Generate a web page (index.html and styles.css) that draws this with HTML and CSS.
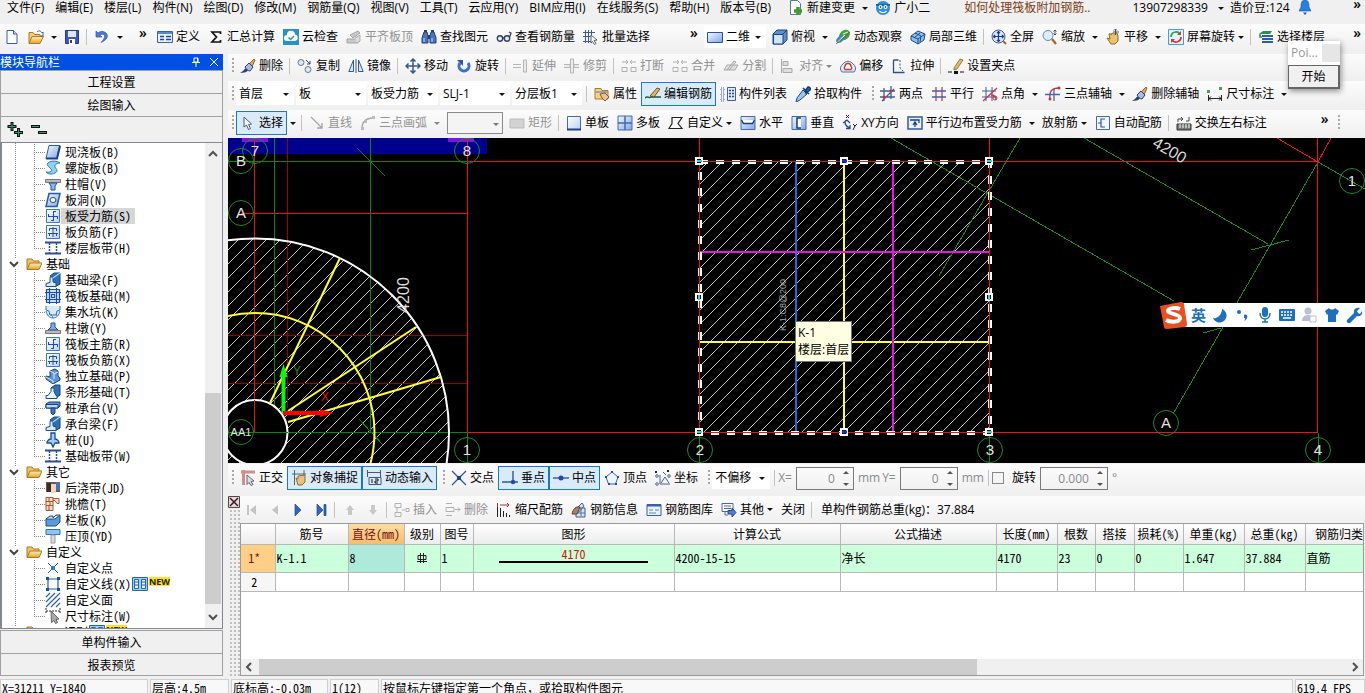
FILE: index.html
```html
<!DOCTYPE html>
<html lang="zh-CN">
<head>
<meta charset="utf-8">
<title>钢筋算量</title>
<link rel="stylesheet" href="styles.css">
</head>
<body>
<svg class="defs" aria-hidden="true">
<defs>
<linearGradient id="gb" x1="0" y1="0" x2="1" y2="1"><stop offset="0" stop-color="#f4f9ff"/><stop offset="1" stop-color="#7fa6e8"/></linearGradient>
<linearGradient id="gl" x1="0" y1="0" x2="1" y2="1"><stop offset="0" stop-color="#fff"/><stop offset="1" stop-color="#b9d2f8"/></linearGradient>
<linearGradient id="gy" x1="0" y1="0" x2="0" y2="1"><stop offset="0" stop-color="#fff0a8"/><stop offset="1" stop-color="#e2a232"/></linearGradient>
<pattern id="hatch" width="14" height="14" patternUnits="userSpaceOnUse"><path d="M-1 15L15-1" stroke="#c4c4c4" stroke-width="1" fill="none"/></pattern>
</defs>
<symbol id="new" viewBox="0 0 16 16"><path d="M3 1.500h6.500l3.500 3.500v9.500H3z" fill="#fff" stroke="#3d5a94"/><path d="M9.500 1.500V5H13" fill="#cfe0fa" stroke="#3d5a94"/></symbol>
<symbol id="open" viewBox="0 0 16 16"><path d="M1 14V3.500h4l1.500 2H12V8" fill="#f5cf69" stroke="#a8792a"/><path d="M1 14.500L4 7.500h11.500L12 14.500z" fill="url(#gy)" stroke="#a8792a"/><path d="M9 3c2-2 4-1 5 1l1-1v4h-3" fill="none" stroke="#47608f"/></symbol>
<symbol id="save" viewBox="0 0 16 16"><path d="M1.500 1.500h13v13h-13z" fill="#3f58b5" stroke="#273a86"/><path d="M4 2h8v6H4z" fill="#dfe9fb"/><path d="M5 10h6v5H5z" fill="#fff"/><path d="M6 11h2v3H6z" fill="#273a86"/></symbol>
<symbol id="undo" viewBox="0 0 16 16"><path d="M2 2v6h6L5.700 6C9 4 12 6 10 9.500c-.7 1.500-2 3-3 4C13 11 15 7 12 4 10 2 6 2 4 4z" fill="#4f7bd0" stroke="#33589f" stroke-width=".7"/></symbol>
<symbol id="def" viewBox="0 0 16 16"><path d="M.5 2.500h15v11H.5z" fill="#e9f1ff" stroke="#3863a8"/><path d="M1 3h14v2H1z" fill="#5b86d0"/><path d="M3 7.500h4M3 10.500h4M9 7.500h5M9 10.500h5" stroke="#24488d" stroke-width="1.500"/></symbol>
<symbol id="sigma" viewBox="0 0 16 16"><path d="M12.500 5V3H4l4.500 5L4 13h8.500v-2" fill="none" stroke="#111" stroke-width="1.700"/></symbol>
<symbol id="cloud" viewBox="0 0 16 16"><path d="M0 0h16v16H0z" fill="#2592c8"/><path d="M4 12a3 3 0 010-6 4 4 0 018-.5 3.300 3.300 0 010 6.500z" fill="#fff"/><path d="M5.500 8.500L7.500 10.500 11 7" fill="none" stroke="#2592c8" stroke-width="1.500"/></symbol>
<symbol id="flat" viewBox="0 0 16 16"><path d="M1 10h11v4H1zM4 6l8-4 2 2-7 5z" fill="#c9c9c9" stroke="#a5a5a5"/><path d="M9 9l5-3v6l-3 2" fill="#ddd" stroke="#aaa"/></symbol>
<symbol id="binoc" viewBox="0 0 16 16"><path d="M3 3h3l1 4v7H1V9zM13 3h-3L9 7v7h6V9z" fill="#4d74b8" stroke="#213f7c"/><path d="M7 6h2v4H7zM3 1h3v2H3zM10 1h3v2h-3z" fill="#213f7c"/><path d="M3 9v4M11 9v4" stroke="#c7dcff"/></symbol>
<symbol id="glass" viewBox="0 0 16 16"><circle cx="4" cy="9.500" r="2.700" fill="#e2ecfa" stroke="#333f5c" stroke-width="1.400"/><circle cx="11" cy="9.500" r="2.700" fill="#e2ecfa" stroke="#333f5c" stroke-width="1.400"/><path d="M7 9h1M13.500 8.500L15 4l-2-1" fill="none" stroke="#333f5c" stroke-width="1.300"/></symbol>
<symbol id="batch" viewBox="0 0 16 16"><path d="M2.500 1v13M5.500 1v13M8.500 1v8M0 3.500h12M0 7.500h8M0 12.500h8" stroke="#3c5a94" fill="none"/><path d="M8 6l6 5-3 .5 2 3-1.500 1-2-3L8 14z" fill="#fff" stroke="#566"/></symbol>
<symbol id="rect2d" viewBox="0 0 16 16"><path d="M.5 3.500h15v10H.5z" fill="url(#gb)" stroke="#2c4f9c"/></symbol>
<symbol id="cube" viewBox="0 0 16 16"><path d="M1 5l4-4h10v10l-4 4H1z" fill="#5f8fc7" stroke="#1f4377"/><path d="M1.500 5.500h9.500V15H1.500z" fill="#cfe4fa" stroke="#1f4377"/><path d="M11 5l4-4" stroke="#1f4377"/></symbol>
<symbol id="orbit" viewBox="0 0 16 16"><ellipse cx="9.500" cy="6" rx="6" ry="4.500" fill="#3aa14a" transform="rotate(-40 9.500 6)"/><ellipse cx="5.500" cy="10" rx="5" ry="2.800" fill="#2f8ac0" transform="rotate(-40 5.500 10)"/><path d="M8 5l5-2M3 13l7-7" stroke="#d9f7c0" stroke-width="1.300"/><path d="M1 15L15 3" stroke="#a33" stroke-width=".8"/></symbol>
<symbol id="local" viewBox="0 0 16 16"><path d="M1 7l7-5 7 3-1 6-6 4-7-4z" fill="#8fc0ea" stroke="#1c4c86"/><path d="M1 7l7 3 7-5M8 10v5M5 4l6 3-1 6M4 9l6-5" fill="none" stroke="#1c4c86"/></symbol>
<symbol id="full" viewBox="0 0 16 16"><circle cx="7.500" cy="7.500" r="6.500" fill="#d5e7fb" stroke="#44597e"/><path d="M7.500 2.500v10M2.500 7.500h10M6 4l1.500-1.500L9 4M6 11l1.500 1.500L9 11M4 6L2.500 7.500 4 9M11 6l1.500 1.500L11 9" stroke="#1d3d8c" fill="none" stroke-width="1.200"/><path d="M12 12l3 3" stroke="#a4632d" stroke-width="2"/></symbol>
<symbol id="zoom" viewBox="0 0 16 16"><circle cx="6" cy="6.500" r="5" fill="#dcebfd" stroke="#6b86a8"/><path d="M10 10l4 5" stroke="#a4632d" stroke-width="2.200"/><path d="M13 1v5M11.500 2.500L13 1l1.500 1.500M11.500 4.500L13 6l1.500-1.500" stroke="#234" fill="none" stroke-width=".8"/></symbol>
<symbol id="hand" viewBox="0 0 16 16"><path d="M2 9l3 1-1-5c1-1 2 0 2 1l1-2 2 1 3-1 1 3v5l-3 3H6z" fill="#e9c46a" stroke="#8d6a24"/><path d="M10.500 0v6M8 3h6M9 1.500L10.500 0 12 1.500" stroke="#345" fill="none" stroke-width=".9"/></symbol>
<symbol id="scr" viewBox="0 0 16 16"><path d="M.5.5h15v15H.5z" fill="#e0f2fc" stroke="#4a9bd0"/><path d="M3 8a5 5 0 019-3" fill="none" stroke="#39a04a" stroke-width="1.800"/><path d="M13 8a5 5 0 01-9 3" fill="none" stroke="#d33" stroke-width="1.800"/><path d="M13 2v4H9zM3 14v-4h4z" fill="#d33"/></symbol>
<symbol id="floors" viewBox="0 0 16 16"><path d="M1 5l4-3h9l-2 3z" fill="#2f8b57"/><path d="M4 7h11M4 10h11M4 13h11" stroke="#2a5ea8" stroke-width="1.800"/><path d="M2 5v3h2" fill="none" stroke="#2f8b57" stroke-width="1.500"/></symbol>
<symbol id="doc" viewBox="0 0 16 16"><path d="M2.500.5h7l3 3v11h-10z" fill="#fff" stroke="#5578b0"/><path d="M10 7v8M6 11h8" stroke="#3f9a2a" stroke-width="3.500"/></symbol>
<symbol id="face" viewBox="0 0 16 16"><circle cx="8" cy="8" r="7" fill="#2b8fd8"/><path d="M1 5h14" stroke="#1769ad" stroke-width="2"/><circle cx="5.500" cy="7" r="2" fill="#fff"/><circle cx="10.500" cy="7" r="2" fill="#fff"/><circle cx="5.500" cy="7" r=".8"/><circle cx="10.500" cy="7" r=".8"/><path d="M4.500 11c2 2 5 2 7 0" stroke="#fff" stroke-width="1.400" fill="none"/></symbol>
<symbol id="bell" viewBox="0 0 16 16"><path d="M8 0c4 0 4 4 4 7l2 4H2l2-4c0-3 0-7 4-7z" fill="#2a7de1" stroke="#1757ad" stroke-width=".6"/><path d="M6 12.500h4L8 15z" fill="#1757ad"/></symbol>
<symbol id="del" viewBox="0 0 16 16"><path d="M9 6l5-5 1 1-3 7z" fill="#e8a55a" stroke="#7c4b1b" stroke-width=".8"/><path d="M5 9l4-4 4 4-3 4c-2 0-4-2-5-4z" fill="#a9bde4" stroke="#2b3c73"/><path d="M0 14.500c4-1 4-4 6-4l2 2c-2 2-4 2.500-8 2z" fill="#2b3c73"/></symbol>
<symbol id="copy" viewBox="0 0 16 16"><circle cx="4" cy="4.500" r="3" fill="#dfe9f5" stroke="#66788f"/><circle cx="11" cy="11.500" r="3" fill="#dfe9f5" stroke="#66788f"/><path d="M9 2l4 4M13 3v3h-3" stroke="#2546a0" fill="none"/></symbol>
<symbol id="mirror" viewBox="0 0 16 16"><path d="M5.500 2v11.500H.8zM10.500 2v11.500h4.700z" fill="#dce8f8" stroke="#31588f"/><path d="M8 1v14" stroke="#31588f"/></symbol>
<symbol id="move" viewBox="0 0 16 16"><path d="M8 1v14M1 8h14M5.500 3.500L8 1l2.500 2.500M5.500 12.500L8 15l2.500-2.500M3.500 5.500L1 8l2.500 2.500M12.500 5.500L15 8l-2.500 2.500" fill="none" stroke="#39598c" stroke-width="1.500"/></symbol>
<symbol id="rot" viewBox="0 0 16 16"><path d="M4 5a5 5 0 108 0" fill="none" stroke="#3c6fc6" stroke-width="3"/><path d="M1 2h6v6z" fill="#2a57aa"/></symbol>
<symbol id="ext" viewBox="0 0 16 16"><path d="M0 6.500h8M0 9.500h8M10.500 2v12h3V2z" stroke="#b5b5b5" fill="#e8e8e8"/></symbol>
<symbol id="trim" viewBox="0 0 16 16"><path d="M0 6.500h6v3H0M15 6.500h-5v3h5M6.500 1v14h3V1z" stroke="#b5b5b5" fill="#ececec"/></symbol>
<symbol id="brk" viewBox="0 0 16 16"><path d="M1 9.500h5v4H1zM10 9.500h5v4h-5zM1 4h6M9 4h6M5 2l2 2-2 2M11 2L9 4l2 2" stroke="#b0b0b0" fill="none"/></symbol>
<symbol id="split" viewBox="0 0 16 16"><path d="M1 12l3-5h11l-3 5zM4 12l7-9 2 1-7 8" stroke="#aaa" fill="#ddd"/></symbol>
<symbol id="align" viewBox="0 0 16 16"><path d="M1.500 1v14M3 3.500h5v4H3zM3 10.500h9v4H3z" stroke="#aaa" fill="#dedede"/></symbol>
<symbol id="offset" viewBox="0 0 16 16"><path d="M2 14a5 5 0 011-8 6 6 0 0110 0 5 5 0 011 8z" fill="#dce9f8" stroke="#5a6e92"/><path d="M5 11.500a2 2 0 010-3 3 3 0 016 0 2 2 0 010 3z" fill="#fff" stroke="#c33" stroke-width="1.300"/></symbol>
<symbol id="stretch" viewBox="0 0 16 16"><path d="M2.500 2v12.500h11M2.500 2h5" fill="none" stroke="#28508e" stroke-width="1.300"/><path d="M9 2v8l4 4" fill="none" stroke="#28508e" stroke-dasharray="2 1.500"/></symbol>
<symbol id="grip" viewBox="0 0 16 16"><path d="M0 14h4M12 14h4" stroke="#111" stroke-width="1.200"/><path d="M6 13h4v3H6z" fill="#111"/><path d="M6 10l6-9 3 1-6 9-3 1z" fill="#e5bb65" stroke="#775220" stroke-width=".7"/></symbol>
<symbol id="prop" viewBox="0 0 16 16"><path d="M1 2.500h6l1 2h6V13H1z" fill="#f6d27a" stroke="#b07a21"/><path d="M1 6h13" stroke="#7b94c7" stroke-width="1.500"/><path d="M6 8l5-1 4 4-4 4-3-3z" fill="#e8c392" stroke="#8b572a"/></symbol>
<symbol id="edit" viewBox="0 0 16 16"><path d="M0 12c3-3 3 1 6-1h10" fill="none" stroke="#1b5a37" stroke-width="1.500"/><path d="M5 10l7-8 3 1-6 8z" fill="#e7b35b" stroke="#4b3820" stroke-width=".8"/></symbol>
<symbol id="list" viewBox="0 0 16 16"><path d="M1 2h3v3H1zM1 7h3v3H1zM1 12h3v3H1z" fill="none" stroke="#3d5f9e" stroke-dasharray="1 1"/><path d="M7.500 1.500h8v13h-8z" fill="#e3edfb" stroke="#3d5f9e"/><path d="M9 4.500h2M12 4.500h2M9 7.500h2M12 7.500h2M9 10.500h2M12 10.500h2" stroke="#24488d" stroke-width="1.500"/></symbol>
<symbol id="pick" viewBox="0 0 16 16"><path d="M8 4l4 4-7 6-4 2 1-4z" fill="#9ec7ec" stroke="#1d4685"/><path d="M8 2l6 6M10 5l3-4c2 0 3 2 2 3l-4 3z" fill="#2c62b4" stroke="#173a75" stroke-width="1.500"/></symbol>
<symbol id="two" viewBox="0 0 16 16"><path d="M4 2v13M11 0v13M0 5h15M0 11h15M2 15L14 3" stroke="#475c93" stroke-width="1.300"/><circle cx="4" cy="11" r="1.500" fill="#c33"/><circle cx="11" cy="5" r="1.500" fill="#c33"/></symbol>
<symbol id="par" viewBox="0 0 16 16"><path d="M5 1v14M11 1v14" stroke="#b44a5c" stroke-width="1.300"/><path d="M1 5h14M1 11h14" stroke="#44639d" stroke-width="1.300"/></symbol>
<symbol id="ang" viewBox="0 0 16 16"><path d="M4 1v14M10 1v14M0 5h14M0 11h14" stroke="#475c93"/><path d="M1 15L15 2M9 9c3 0 5 2 5 5" stroke="#c33a4c" stroke-width="1.300" fill="none"/><circle cx="13" cy="12" r="2" fill="none" stroke="#c33a4c"/></symbol>
<symbol id="arc3" viewBox="0 0 16 16"><path d="M5 13C4 5 7 2 14 2" stroke="#c33a4c" stroke-width="1.300" fill="none"/><path d="M0 8.500h15M9 3v12" stroke="#4169aa" stroke-width="1.300"/><circle cx="5" cy="13" r="1.500" fill="#c33"/><circle cx="14" cy="2" r="1.500" fill="#c33"/></symbol>
<symbol id="dim" viewBox="0 0 16 16"><path d="M1.500 9v6M14.500 9v6M2 12.500h12M4 10.500l-2 2 2 2M12 10.500l2 2-2 2" stroke="#222" fill="none"/><path d="M0 4h3v3H0zM12 1h3v3h-3z" fill="#4d9c58"/></symbol>
<symbol id="sel" viewBox="0 0 16 16"><path d="M4 2v10l2.500-2 2 4.500 2-1-2-4 3-.5z" fill="#fff" stroke="#44597e"/></symbol>
<symbol id="line" viewBox="0 0 16 16"><path d="M2 2l11 11M13 8v5H8" stroke="#a5a5a5" fill="none" stroke-width="1.300"/></symbol>
<symbol id="arc" viewBox="0 0 16 16"><path d="M2 14C2 7 6 3 13 3" stroke="#aaa" fill="none" stroke-width="1.400"/><path d="M1 12h3v3H1zM4 5h3v3H4zM12 1h3v3h-3z" fill="#bbb"/></symbol>
<symbol id="rectd" viewBox="0 0 16 16"><path d="M1 4h14v9H1z" fill="#d2d2d2" stroke="#bdbdbd"/></symbol>
<symbol id="one" viewBox="0 0 16 16"><path d="M1.500 1.500h13v13h-13z" fill="url(#gl)" stroke="#4668a8"/><path d="M1 14.500h14" stroke="#223f83" stroke-width="2"/></symbol>
<symbol id="multi" viewBox="0 0 16 16"><path d="M1 1h14v14H1z" fill="url(#gb)" stroke="#4668a8"/><path d="M8 1v14M1 8h14" stroke="#4668a8" stroke-width="1.500"/></symbol>
<symbol id="poly" viewBox="0 0 16 16"><path d="M4 2.500h10l-4 6 4 5H1l3-5z" fill="#fff" stroke="#222" stroke-width="1.200"/></symbol>
<symbol id="hor" viewBox="0 0 16 16"><path d="M1 1.500h14v13H1z" fill="url(#gb)" stroke="#4668a8"/><path d="M1.500 5l2 3.500h9l2-3.500" fill="#fff" stroke="#173d88" stroke-width="1.500"/></symbol>
<symbol id="ver" viewBox="0 0 16 16"><path d="M1 1.500h14v13H1z" fill="url(#gb)" stroke="#4668a8"/><path d="M10 3H6v10h4" fill="#fff" stroke="#173d88" stroke-width="1.500"/></symbol>
<symbol id="xy" viewBox="0 0 16 16"><path d="M4 5c-2 3-1 6 4 8M1 8l4-3 3 3M8 10v3.500H4" fill="none" stroke="#234a92" stroke-width="1.300"/><path d="M4 0l3 3M7 0L4 3M11 9l2 2 2-2M13 11l-2 4" stroke="#222" fill="none"/></symbol>
<symbol id="side" viewBox="0 0 16 16"><path d="M1 2h14v12H1z" fill="#eaf2ff" stroke="#36589c" stroke-width="1.500"/><path d="M3 5h9v3M8 7v5M6 10l2-3 2 3" fill="none" stroke="#173d88" stroke-width="1.300"/></symbol>
<symbol id="auto" viewBox="0 0 16 16"><path d="M1.500 1.500h13v13h-13z" fill="#f1f6ff" stroke="#4668a8"/><path d="M10 4H6v8h4M6 8H3" fill="none" stroke="#3157a0" stroke-width="1.200"/></symbol>
<symbol id="swap" viewBox="0 0 16 16"><path d="M1 9h14v6H1z" fill="#777" stroke="#333"/><path d="M4 9v4M7 9v4M10 9v4M13 9v4" stroke="#fff"/><path d="M2 7V4h4M5 2l2 2-2 2M10 6h3V2" fill="none" stroke="#444"/></symbol>
<symbol id="ortho" viewBox="0 0 16 16"><path d="M1 2h14M3.500 0v15" stroke="#d48d8d" stroke-width="3"/><path d="M7 5l7 6-3 .5 2 3-2 1-2-3-2 2z" fill="#ddd" stroke="#667"/></symbol>
<symbol id="snap" viewBox="0 0 16 16"><path d="M1 4h14M3.500 0v15M13 0v9" stroke="#4a628f"/><path d="M5 8l2 1V6l7-1v7l-3 3H7z" fill="#eac275" stroke="#936c2b"/></symbol>
<symbol id="dyn" viewBox="0 0 16 16"><path d="M1 2.500h14M1.500 0v7M14.500 0v7M3 7.500h12v7H3z" fill="none" stroke="#45577c"/><path d="M6 9v4M9 9h3v2H9v2h3" fill="none" stroke="#111"/></symbol>
<symbol id="cross" viewBox="0 0 16 16"><path d="M1 1l14 14M15 1L1 15" stroke="#33569a" stroke-width="1.300"/><path d="M6 6h4v4H6z" fill="#1a3ea0"/></symbol>
<symbol id="perp" viewBox="0 0 16 16"><path d="M0 12h16M11 1v11" stroke="#33569a" stroke-width="1.400"/><circle cx="11" cy="12" r="2.200" fill="#2249a5"/></symbol>
<symbol id="mid" viewBox="0 0 16 16"><path d="M0 8h16" stroke="#33569a" stroke-width="1.400"/><circle cx="8" cy="8" r="2.500" fill="#2249a5"/></symbol>
<symbol id="pent" viewBox="0 0 16 16"><path d="M8 2l6 5-2.500 7h-7L2 7z" fill="#eef5ff" stroke="#3b65a8"/><path d="M7 1h2v2H7zM1 6h2v2H1zM13 6h2v2h-2zM4 13h2v2H4zM11 13h2v2h-2z" fill="#2249a5"/></symbol>
<symbol id="coord" viewBox="0 0 16 16"><path d="M5 5v9h10M6 13l4-6 4 6M8 2l3 3" fill="none" stroke="#44619a"/><g fill="#fff" stroke="#44619a"><circle cx="2" cy="6" r="1.300"/><circle cx="2" cy="14" r="1.300"/><circle cx="14" cy="6" r="1.300"/></g><path d="M0 1l2 2M2 1L0 3M12 0l2 2M14 0l-2 2" stroke="#222"/></symbol>
<symbol id="first" viewBox="0 0 16 16"><path d="M3 3h2v10H3zM12 3v10L6 8z" fill="#c4c4c4"/></symbol>
<symbol id="prev" viewBox="0 0 16 16"><path d="M11 3v10L5 8z" fill="#c4c4c4"/></symbol>
<symbol id="next" viewBox="0 0 16 16"><path d="M5 2v12l6-6z" fill="#2e66c8" stroke="#1e4795" stroke-width=".7"/></symbol>
<symbol id="last" viewBox="0 0 16 16"><path d="M4 2v12l6-6zM11 2.500h2v11h-2z" fill="#2e66c8" stroke="#1e4795" stroke-width=".7"/></symbol>
<symbol id="up" viewBox="0 0 16 16"><path d="M8 3l4 5h-2v5H6V8H4z" fill="#c8c8c8"/></symbol>
<symbol id="down" viewBox="0 0 16 16"><path d="M8 13L4 8h2V3h4v5h2z" fill="#c8c8c8"/></symbol>
<symbol id="ins" viewBox="0 0 16 16"><path d="M1 1.500h6v4H1zM1 10.500h6v4H1zM3 6v4M8 8h3M12 6.500h3v3h-3z" fill="none" stroke="#b0b0b0"/></symbol>
<symbol id="rem" viewBox="0 0 16 16"><path d="M1 1.500h6M1 5.500h8v4H1zM1 13.500h6M10 7.500h5M13 5.500l2 2-2 2" fill="none" stroke="#b0b0b0"/></symbol>
<symbol id="scale" viewBox="0 0 16 16"><path d="M1.500 1v14M4 3h9M11 1l2 2-2 2" fill="none" stroke="#a33a3a"/><path d="M1.500 5v10M4.500 6v9M7.500 9v6M10.500 11v4M13.500 13v2" stroke="#222"/></symbol>
<symbol id="info" viewBox="0 0 16 16"><path d="M3 9l8-8 2 3-7 8zM5 6h9v9H5z" fill="#d3e2f6" stroke="#3c5d98"/><path d="M1 12c1-5 4-8 8-7l-3 7z" fill="#a88655" stroke="#5c4327"/><path d="M10 6v8M6 11h8" stroke="#5575af"/></symbol>
<symbol id="lib" viewBox="0 0 16 16"><path d="M1 2.500h14v11H1z" fill="#eaf2ff" stroke="#3a5f9e"/><path d="M1 3.500h14" stroke="#3a5f9e" stroke-width="2"/><path d="M3 8h4M3 11h7M9 8h4" stroke="#5f82bc"/></symbol>
<symbol id="other" viewBox="0 0 16 16"><path d="M1 1.500h11v8H1zM3 4h7M3 6.500h7M4 10v3h3" fill="#fff" stroke="#4669aa"/><path d="M7 8.500h4V6l4 4.500-4 4.500v-3H7z" fill="#4f80dc" stroke="#21458e"/></symbol>
<symbol id="fold" viewBox="0 0 16 16"><path d="M1 13V3h5l1.500 2H13v3" fill="#f0c65a" stroke="#a37827"/><path d="M1 13.500L4 7h12l-3 6.500z" fill="url(#gy)" stroke="#a37827"/></symbol>
<symbol id="slab" viewBox="0 0 16 16"><path d="M4 1.500h11L12 14.500H1z" fill="url(#gb)" stroke="#2b59a5"/><path d="M1 14.500h11L15 2" fill="none" stroke="#1c3f86" stroke-width="2"/></symbol>
<symbol id="spiral" viewBox="0 0 16 16"><path d="M3 3c4-3 9-2 12 0-3 0-6 2-5 4s4 4 0 6c-4 2-7 1-9-1 4 1 7-1 5-3S1 5 3 3z" fill="#8ed0ef" stroke="#2477b3"/></symbol>
<symbol id="cap" viewBox="0 0 16 16"><path d="M.5 3.500h15v3H.5z" fill="#bbb" stroke="#777"/><path d="M4 7h8l-2 3v4H6v-4z" fill="#8fb7ef" stroke="#23509b"/></symbol>
<symbol id="hole" viewBox="0 0 16 16"><path d="M4 1.500h11L12 14.500H1z" fill="url(#gb)" stroke="#2b59a5" stroke-width="1.500"/><ellipse cx="8" cy="8" rx="3" ry="2.500" fill="#fff" stroke="#1b4a9b"/></symbol>
<symbol id="rebar" viewBox="0 0 16 16"><path d="M1.500 1.500h13v13h-13z" fill="url(#gl)" stroke="#4175c4"/><path d="M8.500 3v10M3 8.500h10M3.500 6v3M12.500 8v3M8 12.500h-2M9 3.500h2" stroke="#1c4c9f" fill="none"/></symbol>
<symbol id="neg" viewBox="0 0 16 16"><path d="M1.500 1.500h13v13h-13z" fill="url(#gl)" stroke="#4175c4"/><path d="M4.500 7V4.500h7V7M4.500 12V9.500h7V12M3 9.500h10M8 3v10" stroke="#1c4c9f" fill="none"/></symbol>
<symbol id="band" viewBox="0 0 16 16"><path d="M0 2.500h16M0 13.500h16" stroke="#2c4f8f" stroke-width="2"/><path d="M4.500 3v10M11.500 3v10" stroke="#2c4f8f" stroke-width="1.500" stroke-dasharray="2 1"/></symbol>
<symbol id="beam" viewBox="0 0 16 16"><path d="M5 4l4-3h6v11l-5 3" fill="#2e6fba" stroke="#184478"/><path d="M1 14.500v-3l4-1V5h3v5l3 1v3.500z" fill="#d4eafd" stroke="#184e91"/><path d="M8 6l7-5" stroke="#9fd3ff" stroke-width="1.500"/></symbol>
<symbol id="raft" viewBox="0 0 16 16"><path d="M1.500 1.500h13v13h-13zM4.500 0v16M11.500 0v16M0 4.500h16M0 11.500h16M6.500 6.500h3v3h-3z" fill="#cfe3ff" stroke="#1c4c9f" stroke-width="1.200"/></symbol>
<symbol id="sump" viewBox="0 0 16 16"><path d="M1 2v4l3 1 1 4h6l1-4 3-1V2M1 7c1 4 3 7 7 7s6-3 7-7" fill="#d8ebfd" stroke="#3373b7"/><path d="M4 10h1M7 13h1M11 11h1M6 11h1" stroke="#184e91"/></symbol>
<symbol id="pier" viewBox="0 0 16 16"><path d="M6 3h4v4l3 3H3l3-3z" fill="#7fabe8" stroke="#23509b"/><path d="M.5 10.500h15v3H.5z" fill="#bbb" stroke="#777"/></symbol>
<symbol id="iso" viewBox="0 0 16 16"><path d="M1 8l4 1V3l5-2 3 2v5l2 2v2l-7 4-7-5z" fill="#5c95d8" stroke="#153f77"/><path d="M5 3l4 2v6M1 9l7 4v2M13 4L9 6" fill="none" stroke="#d8ecff"/></symbol>
<symbol id="strip" viewBox="0 0 16 16"><path d="M6 4l4-3h5v10l-4 3" fill="#2e6fba" stroke="#184478"/><path d="M1 14.500v-3h2l3-4V4h3v3.500l2 4h1v3z" fill="#e6f3ff" stroke="#184e91"/></symbol>
<symbol id="pilecap" viewBox="0 0 16 16"><path d="M1 4l3-2h11v4l-2 2H1z" fill="#5b94d6" stroke="#153f77"/><path d="M1 4.500h12V8H1z" fill="#b9d9f8" stroke="#153f77"/><path d="M6 8h4v5l-2 2-2-2z" fill="#3c78c2" stroke="#153f77"/></symbol>
<symbol id="pile" viewBox="0 0 16 16"><path d="M6 1h4v6c2 0 4 2 4 4h-4l-2 4-2-4H2c0-2 2-4 4-4z" fill="#a8cdf5" stroke="#184e91" stroke-width="1.300"/></symbol>
<symbol id="post" viewBox="0 0 16 16"><path d="M1 2h14v10H1z" fill="#6f5a4a"/><path d="M2 3h4v9H2z" fill="#3a2b27"/><path d="M6 4h5v9H6z" fill="#f0d8bf"/><path d="M11 2h4v8h-4z" fill="#4273bd"/></symbol>
<symbol id="eave" viewBox="0 0 16 16"><path d="M1 1.500h7v13H1zM1 5.500h7M1 9.500h7M4 1v4M5 5v4M4 10v4M8 2.500h6v5h-2l-2-3H8" fill="#f7dac7" stroke="#a5582e"/></symbol>
<symbol id="rail" viewBox="0 0 16 16"><path d="M1 7l9 0 5-4v7l-4 4H1z" fill="#5c9cdc" stroke="#174c85"/><path d="M1 7l4-3h3v2l3-3h4" fill="#a8d6fb" stroke="#174c85"/></symbol>
<symbol id="coping" viewBox="0 0 16 16"><path d="M1 1.500h14v5H1z" fill="#91c3f0" stroke="#2e73b4"/><path d="M6 7h4v8H6z" fill="#d9d9d9" stroke="#999"/></symbol>
<symbol id="cpt" viewBox="0 0 16 16"><path d="M3 3l10 10M13 3L3 13" stroke="#33569a"/><path d="M6 6h4v4H6z" fill="#3477dc"/></symbol>
<symbol id="cline" viewBox="0 0 16 16"><path d="M3 3h10v10H3z" fill="none" stroke="#2b59a5" stroke-width="1.200"/><path d="M1 1h3v3H1zM12 1h3v3h-3zM1 12h3v3H1zM12 12h3v3h-3z" fill="#1c4c9f"/></symbol>
<symbol id="cface" viewBox="0 0 16 16"><path d="M1 5l4-4M1 10l9-9M1 15L15 1M6 15l9-9M11 15l4-4" stroke="#2b62b8" stroke-width="1.200"/></symbol>
<symbol id="cdim" viewBox="0 0 16 16"><path d="M1 0v6M15 0v6M1 3h14" stroke="#333" stroke-dasharray="2 1"/><path d="M6 3l8 8-3 .5 1.500 3-2 1-1.500-3-2.500 2z" fill="#aaa" stroke="#666"/></symbol>
<symbol id="book" viewBox="0 0 16 16"><path d="M.5 1.500h15v13H.5z" fill="#9cd1f6" stroke="#28659b"/><path d="M2.500 3.500h4v9h-4zM9.500 3.500h4v9h-4zM3 6h3M3 9h3M10 6h3M10 9h3" fill="#e5f4ff" stroke="#28659b"/></symbol>
<symbol id="closex" viewBox="0 0 12 12"><path d="M.5.500h11v11H.5z" fill="#ddd" stroke="#544"/><path d="M2 2l8 8M10 2l-8 8" stroke="#412" stroke-width="1.500"/></symbol>
</svg>

<header class="menubar">
<nav class="menus"><button>文件(F)</button><button>编辑(E)</button><button>楼层(L)</button><button>构件(N)</button><button>绘图(D)</button><button>修改(M)</button><button>钢筋量(Q)</button><button>视图(V)</button><button>工具(T)</button><button>云应用(Y)</button><button>BIM应用(I)</button><button>在线服务(S)</button><button>帮助(H)</button><button>版本号(B)</button></nav>
<button class="b"><svg><use href="#doc"/></svg>新建变更</button><i class="ar"></i>
<button class="b"><svg><use href="#face"/></svg>广小二</button>
<div class="account"><a href="#help" class="tip">如何处理筏板附加钢筋..</a><button class="b phone">13907298339</button><i class="ar"></i><span>造价豆:124</span><button class="b bell" aria-label="通知"><svg><use href="#bell"/></svg></button></div>
<span class="more end">»</span>
</header>

<div class="bar top">
<button class="b" aria-label="新建"><svg><use href="#new"/></svg></button><button class="b" aria-label="打开"><svg><use href="#open"/></svg></button><i class="ar"></i><button class="b" aria-label="保存"><svg><use href="#save"/></svg></button><i class="sep"></i><button class="b" aria-label="撤销"><svg><use href="#undo"/></svg></button><i class="ar"></i><span class="more gap">»</span>
<button class="b"><svg><use href="#def"/></svg>定义</button><button class="b"><svg><use href="#sigma"/></svg>汇总计算</button><button class="b"><svg><use href="#cloud"/></svg>云检查</button><button class="b" disabled><svg><use href="#flat"/></svg>平齐板顶</button><button class="b"><svg><use href="#binoc"/></svg>查找图元</button><button class="b"><svg><use href="#glass"/></svg>查看钢筋量</button><button class="b"><svg><use href="#batch"/></svg>批量选择</button><span class="more wide">»</span>
<label class="pick view"><svg><use href="#rect2d"/></svg><select aria-label="视图维度"><option>二维</option></select></label>
<button class="b"><svg><use href="#cube"/></svg>俯视</button><i class="ar"></i><button class="b"><svg><use href="#orbit"/></svg>动态观察</button><button class="b"><svg><use href="#local"/></svg>局部三维</button><i class="sep"></i><button class="b"><svg><use href="#full"/></svg>全屏</button><button class="b"><svg><use href="#zoom"/></svg>缩放</button><i class="ar"></i><button class="b"><svg><use href="#hand"/></svg>平移</button><i class="ar"></i><button class="b"><svg><use href="#scr"/></svg>屏幕旋转<i class="tri"></i></button><i class="sep"></i><button class="b"><svg><use href="#floors"/></svg>选择楼层</button><span class="more end">»</span>
</div>

<div class="main">
<aside class="nav">
<div class="nav-title"><span>模块导航栏</span><button aria-label="固定"><svg viewBox="0 0 10 10"><path d="M3 1h4v4H3zM1 5.500h8M5 6v4M6.500 1v4" fill="none" stroke="#fff"/></svg></button><button aria-label="关闭"><svg viewBox="0 0 10 10"><path d="M1 1l8 8M9 1L1 9" stroke="#fff"/></svg></button></div>
<button class="nav-tab">工程设置</button>
<button class="nav-tab">绘图输入</button>
<div class="nav-tools"><button aria-label="展开"><svg viewBox="0 0 16 16"><path d="M5 0v9M.5 4.500h9M11.500 6v9M7 10.500h9" stroke="#111" stroke-width="3"/><path d="M5 1v7M1.500 4.500h7M11.500 7v7M8 10.500h7" stroke="#2f9a6a"/></svg></button><button aria-label="折叠"><svg viewBox="0 0 16 16"><path d="M0 4.500h9M7 10.500h9" stroke="#111" stroke-width="3"/><path d="M1 4.500h7M8 10.500h7" stroke="#2f9a6a"/></svg></button></div>
<div class="tree">
<ul>
<li class="leaf"><svg><use href="#slab"/></svg><span>现浇板(B)</span></li>
<li class="leaf"><svg><use href="#spiral"/></svg><span>螺旋板(B)</span></li>
<li class="leaf"><svg><use href="#cap"/></svg><span>柱帽(V)</span></li>
<li class="leaf"><svg><use href="#hole"/></svg><span>板洞(N)</span></li>
<li class="leaf on"><svg><use href="#rebar"/></svg><span>板受力筋(S)</span></li>
<li class="leaf"><svg><use href="#neg"/></svg><span>板负筋(F)</span></li>
<li class="leaf last"><svg><use href="#band"/></svg><span>楼层板带(H)</span></li>
<li class="group"><svg class="chev" viewBox="0 0 10 10"><path d="M1 3l4 4 4-4"/></svg><svg><use href="#fold"/></svg><span>基础</span></li>
<li class="leaf"><svg><use href="#beam"/></svg><span>基础梁(F)</span></li>
<li class="leaf"><svg><use href="#raft"/></svg><span>筏板基础(M)</span></li>
<li class="leaf"><svg><use href="#sump"/></svg><span>集水坑(K)</span></li>
<li class="leaf"><svg><use href="#pier"/></svg><span>柱墩(Y)</span></li>
<li class="leaf"><svg><use href="#rebar"/></svg><span>筏板主筋(R)</span></li>
<li class="leaf"><svg><use href="#neg"/></svg><span>筏板负筋(X)</span></li>
<li class="leaf"><svg><use href="#iso"/></svg><span>独立基础(P)</span></li>
<li class="leaf"><svg><use href="#strip"/></svg><span>条形基础(T)</span></li>
<li class="leaf"><svg><use href="#pilecap"/></svg><span>桩承台(V)</span></li>
<li class="leaf"><svg><use href="#beam"/></svg><span>承台梁(F)</span></li>
<li class="leaf"><svg><use href="#pile"/></svg><span>桩(U)</span></li>
<li class="leaf last"><svg><use href="#band"/></svg><span>基础板带(W)</span></li>
<li class="group"><svg class="chev" viewBox="0 0 10 10"><path d="M1 3l4 4 4-4"/></svg><svg><use href="#fold"/></svg><span>其它</span></li>
<li class="leaf"><svg><use href="#post"/></svg><span>后浇带(JD)</span></li>
<li class="leaf"><svg><use href="#eave"/></svg><span>挑檐(T)</span></li>
<li class="leaf"><svg><use href="#rail"/></svg><span>栏板(K)</span></li>
<li class="leaf last"><svg><use href="#coping"/></svg><span>压顶(YD)</span></li>
<li class="group"><svg class="chev" viewBox="0 0 10 10"><path d="M1 3l4 4 4-4"/></svg><svg><use href="#fold"/></svg><span>自定义</span></li>
<li class="leaf"><svg><use href="#cpt"/></svg><span>自定义点</span></li>
<li class="leaf"><svg><use href="#cline"/></svg><span>自定义线(X)</span><svg class="book"><use href="#book"/></svg><b class="fresh">NEW</b></li>
<li class="leaf"><svg><use href="#cface"/></svg><span>自定义面</span></li>
<li class="leaf last"><svg><use href="#cdim"/></svg><span>尺寸标注(W)</span></li>
<li class="group"><svg class="chev"></svg><svg><use href="#fold"/></svg><span>CAD识别</span><svg class="book"><use href="#book"/></svg><b class="fresh">NEW</b></li>
</ul>
<div class="vscroll"><svg viewBox="0 0 16 22"><path d="M4 13l4-4 4 4"/></svg><div class="vtrack"><i></i></div><svg viewBox="0 0 16 22"><path d="M4 9l4 4 4-4"/></svg></div>
</div>
<button class="nav-tab">单构件输入</button>
<button class="nav-tab">报表预览</button>
</aside>

<section class="work">
<div class="bar r1"><i class="grip"></i><button class="b"><svg><use href="#del"/></svg>删除</button><i class="sep"></i><button class="b"><svg><use href="#copy"/></svg>复制</button><button class="b"><svg><use href="#mirror"/></svg>镜像</button><i class="sep"></i><button class="b"><svg><use href="#move"/></svg>移动</button><button class="b"><svg><use href="#rot"/></svg>旋转</button><i class="sep"></i><button class="b" disabled><svg><use href="#ext"/></svg>延伸</button><button class="b" disabled><svg><use href="#trim"/></svg>修剪</button><i class="sep"></i><button class="b" disabled><svg><use href="#brk"/></svg>打断</button><button class="b" disabled><svg><use href="#brk"/></svg>合并</button><button class="b" disabled><svg><use href="#split"/></svg>分割</button><i class="sep"></i><button class="b" disabled><svg><use href="#align"/></svg>对齐<i class="tri"></i></button><button class="b"><svg><use href="#offset"/></svg>偏移</button><button class="b"><svg><use href="#stretch"/></svg>拉伸</button><i class="sep"></i><button class="b"><svg><use href="#grip"/></svg>设置夹点</button></div>

<div class="bar r2"><i class="grip"></i><label class="pick short"><select aria-label="楼层"><option>首层</option></select></label><label class="pick"><select aria-label="构件类别"><option>板</option></select></label><label class="pick"><select aria-label="构件类型"><option>板受力筋</option></select></label><label class="pick"><select aria-label="构件"><option>SLJ-1</option></select></label><label class="pick"><select aria-label="分层"><option>分层板1</option></select></label><i class="sep"></i><button class="b"><svg><use href="#prop"/></svg>属性</button><button class="b on"><svg><use href="#edit"/></svg>编辑钢筋</button><button class="b"><svg><use href="#list"/></svg>构件列表</button><button class="b"><svg><use href="#pick"/></svg>拾取构件</button><i class="grip mid"></i><button class="b"><svg><use href="#two"/></svg>两点</button><button class="b"><svg><use href="#par"/></svg>平行</button><button class="b"><svg><use href="#ang"/></svg>点角</button><i class="ar"></i><button class="b"><svg><use href="#arc3"/></svg>三点辅轴</button><i class="ar"></i><button class="b"><svg><use href="#del"/></svg>删除辅轴</button><button class="b"><svg><use href="#dim"/></svg>尺寸标注</button><i class="ar"></i></div>

<div class="bar r3"><i class="grip"></i><button class="b on"><svg><use href="#sel"/></svg>选择</button><i class="ar"></i><i class="sep"></i><button class="b" disabled><svg><use href="#line"/></svg>直线</button><button class="b" disabled><svg><use href="#arc"/></svg>三点画弧</button><i class="ar dim"></i><label class="pick boxed"><select aria-label="画弧方式" disabled><option></option></select></label><button class="b" disabled><svg><use href="#rectd"/></svg>矩形</button><i class="sep"></i><button class="b"><svg><use href="#one"/></svg>单板</button><button class="b"><svg><use href="#multi"/></svg>多板</button><button class="b"><svg><use href="#poly"/></svg>自定义<i class="tri"></i></button><button class="b"><svg><use href="#hor"/></svg>水平</button><button class="b"><svg><use href="#ver"/></svg>垂直</button><button class="b"><svg><use href="#xy"/></svg>XY方向</button><button class="b"><svg><use href="#side"/></svg>平行边布置受力筋</button><i class="ar"></i><button class="b">放射筋<i class="tri"></i></button><button class="b"><svg><use href="#auto"/></svg>自动配筋</button><i class="sep"></i><button class="b"><svg><use href="#swap"/></svg>交换左右标注</button><span class="more tail">»</span><i class="grip"></i></div>

<div class="canvas">
<svg class="scene" viewBox="0 0 1137 325" preserveAspectRatio="xMinYMin slice">
<path d="M0 0h259v16H0z" fill="#00008f"/><path d="M14 0h26v4H14zM220 0h26v4h-26z" fill="#7b12e6"/>
<path fill="url(#hatch)" fill-rule="evenodd" d="M27 100A194.500 194.500 0 0127 489A194.500 194.500 0 0127 100zM27 262a32.500 32.500 0 000 65a32.500 32.500 0 000-65z"/>
<path fill="url(#hatch)" d="M472 24h290v271H472z"/>
<g class="crisp" stroke="#9c0000"><path d="M59.500 0v270M0 197.500h239M0 245.500h239"/></g>
<g class="crisp" stroke="#008a10"><path d="M46.500 0v295M142.500 0v295M0 23.500h239M0 294.500h239M129 10l28 28M131 281l24 26M33 281l25 26M239.500 295v30M471.500 295v30M761.500 295v30M1090.500 295v30"/></g>
<g class="crisp" stroke="#158a1c"><path d="M663 0l283 163M856 0l184 106M1090 24L945 276M1023 112l38-10M975 195l18-5M792 0l-81 138M1090 24l47 27"/></g>
<g class="crisp" stroke="#f01010"><path d="M26.500 0v295M239.500 0v295M13 75.500h226M239 23.500h851M239 294.500h851M471.500 0v295M761.500 0v295M1089.500 0v295M1049 0l41 24 13-24"/></g>
<g fill="none" stroke="#fff" stroke-width="2"><circle cx="27" cy="294.500" r="32.500" fill="#000"/><circle cx="27" cy="294.500" r="194"/></g>
<path class="crisp" d="M0 294.500h60" stroke="#008a10"/><path class="crisp" d="M26.500 262v33" stroke="#f01010"/>
<g fill="none" stroke="#ff3" stroke-width="2"><circle cx="27" cy="294.500" r="119.500"/><path d="M42 265l70-145M60 273l128-84M60 284l153-45M616 24v271M472 204h290"/></g>
<path d="M568 24v271" stroke="#1c6fd6" stroke-width="2"/><path d="M665 24v271M472 114h290" stroke="#e815e8" stroke-width="2"/>
<path d="M472 24h290v271H472z" fill="none" stroke="#fff" stroke-width="4" stroke-dasharray="8 8"/>
<path class="crisp" d="M471.500 24v271M761.500 24v271M472 23.500h290M472 294.500h290" stroke="#f01010"/>
<g fill="#000" stroke="#fff" stroke-width="2"><path d="M468 20h6v6h-6zM758 20h6v6h-6zM613 20h6v6h-6zM468 291h6v6h-6zM758 291h6v6h-6zM613 291h6v6h-6zM468 156h6v6h-6zM758 156h6v6h-6z"/></g>
<path d="M469 23h5M759 23h5M469 294h5M759 294h5M471 157v5M761 157v5" stroke="#1adfe8" stroke-width="2"/><path d="M614 23h5M614 294h5" stroke="#1030d8" stroke-width="3"/>
<path d="M55.500 275v-42" stroke="#0f0" stroke-width="4"/><path d="M55.500 226l4 13h-8z" fill="#0f0"/><path d="M55 275h40" stroke="#f00" stroke-width="4"/><path d="M105 275l-13 4v-8z" fill="#f00"/>
<g fill="none" stroke="#1f8a26"><circle cx="13" cy="23" r="12.500"/><circle cx="27" cy="13" r="12.500"/><circle cx="239" cy="13" r="12.500"/><circle cx="13" cy="75" r="12.500"/><circle cx="13" cy="294" r="12.500"/><circle cx="239" cy="312" r="12.500"/><circle cx="472" cy="312" r="12.500"/><circle cx="762" cy="312" r="12.500"/><circle cx="1090" cy="312" r="12.500"/><circle cx="938" cy="285" r="12.500"/><circle cx="1124" cy="43" r="12.500"/></g>
<g class="cad"><text x="13" y="28">B</text><text x="27" y="18">7</text><text x="239" y="18">8</text><text x="13" y="80">A</text><text class="small" x="13" y="298">AA1</text><text x="239" y="317">1</text><text x="472" y="317">2</text><text x="762" y="317">3</text><text x="1090" y="317">4</text><text x="938" y="290">A</text><text x="1124" y="48">1</text></g>
<text class="len" transform="translate(181 157) rotate(-90)">4200</text><text class="len" transform="translate(939 17) rotate(30)">4200</text>
<text class="mark" transform="translate(558 167) rotate(-90)">K-1:C8@200</text>
<text class="axis" x="65" y="237" fill="#1f8a26">Y</text><text class="axis" x="93" y="263" fill="#e01515">X</text>
</svg>
<div class="hint">K-1<br>楼层:首层</div>
<div class="ime"><svg class="sogou" viewBox="0 0 28 28"><path d="M1 5l21-4c2 0 3 1 3 2l3 20c0 2-1 3-2 3L8 28c-2 0-3-1-3-2z" fill="#e8501f"/><path d="M21 8c-4-2-12-1-12 2s12 3 12 7-9 5-14 2" fill="none" stroke="#fff" stroke-width="4"/></svg><div class="ime-bar"><b>英</b><svg viewBox="0 0 16 16"><path d="M10 2a7 7 0 11-9 9c5 1 9-4 9-9z"/></svg><svg viewBox="0 0 16 16"><circle cx="4" cy="5" r="2"/><path d="M9 8c4-2 5 4 0 6 2-2 1-3 0-3z"/></svg><svg viewBox="0 0 16 16"><rect x="5" y="0" width="6" height="10" rx="3"/><path d="M3 6c0 8 10 8 10 0M8 12v3M5 15h6" fill="none" stroke="#1f6fc0" stroke-width="1.500"/></svg><svg viewBox="0 0 16 16"><rect x="0" y="2" width="16" height="12" rx="1"/><path d="M2 5h12M2 8h12" stroke="#fff" stroke-width="1.500" stroke-dasharray="2 1"/><path d="M4 11h8" stroke="#fff" stroke-width="1.500"/></svg><svg class="pale" viewBox="0 0 16 16"><circle cx="7" cy="4" r="3.500"/><path d="M1 14c0-8 12-8 12 0z"/><path d="M9 9h6v6H9z" fill="#fff" stroke="#b7bfd0"/></svg><svg viewBox="0 0 16 16"><path d="M5 1c1 2 5 2 6 0l4 3-2 4-1-1v8H4V7L3 8 1 4z"/></svg><svg viewBox="0 0 16 16"><path d="M1 13l7-7c-1-4 3-6 6-5l-3 3 1 2 2 1 2-3c1 4-2 6-5 5l-7 7c-2 1-4-1-3-3z"/></svg></div></div>
</div>

<div class="bar snap"><i class="grip"></i><button class="b"><svg><use href="#ortho"/></svg>正交</button><button class="b on"><svg><use href="#snap"/></svg>对象捕捉</button><button class="b on"><svg><use href="#dyn"/></svg>动态输入</button><i class="grip mid"></i><button class="b"><svg><use href="#cross"/></svg>交点</button><button class="b on"><svg><use href="#perp"/></svg>垂点</button><button class="b on"><svg><use href="#mid"/></svg>中点</button><button class="b"><svg><use href="#pent"/></svg>顶点</button><button class="b"><svg><use href="#coord"/></svg>坐标</button><i class="grip mid"></i><label class="pick short"><select aria-label="偏移方式"><option>不偏移</option></select></label><i class="sep"></i><label class="num">X=<span class="spin"><input value="0" disabled></span>mm</label><label class="num">Y=<span class="spin"><input value="0" disabled></span>mm</label><i class="sep"></i><label class="turn"><input type="checkbox">旋转</label><label class="num"><span class="spin long"><input aria-label="旋转角度" value="0.000" disabled></span>°</label></div>

<div class="detail">
<div class="split"><button aria-label="关闭面板"><svg viewBox="0 0 12 12"><use href="#closex"/></svg></button></div>
<div class="detail-body">
<div class="bar dbar"><button class="n" disabled aria-label="首条"><svg><use href="#first"/></svg></button><button class="n" disabled aria-label="上一条"><svg><use href="#prev"/></svg></button><button class="n" aria-label="下一条"><svg><use href="#next"/></svg></button><button class="n" aria-label="末条"><svg><use href="#last"/></svg></button><i class="sep"></i><button class="n" disabled aria-label="上移"><svg><use href="#up"/></svg></button><button class="n" disabled aria-label="下移"><svg><use href="#down"/></svg></button><i class="sep"></i><button class="b" disabled><svg><use href="#ins"/></svg>插入</button><button class="b" disabled><svg><use href="#rem"/></svg>删除</button><button class="b"><svg><use href="#scale"/></svg>缩尺配筋</button><button class="b"><svg><use href="#info"/></svg>钢筋信息</button><button class="b"><svg><use href="#lib"/></svg>钢筋图库</button><button class="b"><svg><use href="#other"/></svg>其他<i class="tri"></i></button><button class="b">关闭</button><i class="sep"></i><span class="total">单构件钢筋总重(kg)：37.884</span></div>
<div class="sheet">
<table>
<colgroup><col class="w34"><col class="w73"><col class="w56"><col class="w36"><col class="w33"><col class="w201"><col class="w166"><col class="w156"><col class="w61"><col class="w38"><col class="w39"><col class="w49"><col class="w61"><col class="w61"><col></colgroup>
<thead><tr><th></th><th>筋号</th><th class="hot">直径(mm)</th><th>级别</th><th>图号</th><th>图形</th><th>计算公式</th><th>公式描述</th><th>长度(mm)</th><th>根数</th><th>搭接</th><th>损耗(%)</th><th>单重(kg)</th><th>总重(kg)</th><th class="end">钢筋归类</th></tr></thead>
<tbody>
<tr class="cur"><td class="idx">1*</td><td>K-1.1</td><td class="cell">8</td><td class="mid"><svg class="grade" viewBox="0 0 10 10"><path d="M3.500 0v10M6.500 0v10M1 2.500h8v4H1zM0 8.500h10" fill="none" stroke="#222"/></svg></td><td>1</td><td class="shape"><span>4170</span></td><td>4200-15-15</td><td>净长</td><td>4170</td><td>23</td><td>0</td><td>0</td><td>1.647</td><td>37.884</td><td>直筋</td></tr>
<tr><td class="idx">2</td><td></td><td class="cell"></td><td></td><td></td><td></td><td></td><td></td><td></td><td></td><td></td><td></td><td></td><td></td><td></td></tr>
</tbody>
</table>
<div class="hscroll"><svg viewBox="0 0 16 16"><path d="M10 4L6 8l4 4"/></svg><div class="htrack"><i></i></div><svg viewBox="0 0 16 16"><path d="M6 4l4 4-4 4"/></svg></div>
</div>
</div>
</div>
</section>
</div>

<footer class="status"><span class="s1">X=31211 Y=1840</span><span class="s2">层高:4.5m</span><span class="s3">底标高:-0.03m</span><span class="s4">1(12)</span><span class="s5">按鼠标左键指定第一个角点，或拾取构件图元</span><span class="s6">619.4 FPS</span></footer>

<div class="poi"><div class="poi-title">Poi...<i></i></div><button>开始</button></div>
</body>
</html>
```
FILE: styles.css
```css
* { box-sizing: border-box; }
body {
  margin: 0;
  height: 100vh;
  display: flex;
  flex-direction: column;
  position: relative;
  overflow: hidden;
  background: #f0f0f0;
  color: #000;
  font: 12px/16px "Open Sans", "Noto Sans CJK SC", sans-serif;
}
button, input, select { font: inherit; color: inherit; }
button { border: 0; background: none; padding: 0; white-space: nowrap; }
.defs { position: absolute; width: 0; height: 0; }
svg { flex: none; }

/* menu bar and tool bars */
.menubar { display: flex; align-items: center; height: 24px; padding: 0 4px 8px 2px; }
.menus { display: flex; gap: 1px; margin-right: 8px; }
.menus button { padding: 0 5px; }
.account { display: flex; align-items: center; margin-left: 30px; }
.tip { color: #7b3a12; text-decoration: none; margin-right: 38px; }
.account .ar { margin-left: 6px; margin-right: 6px; }
.bell { margin-left: 3px; }
.bar { display: flex; align-items: center; height: 26px; flex: none; background: linear-gradient(#fcfcfc, #f0f0f0); }
.top { margin-bottom: 4px; padding-right: 4px; }
.b { display: flex; align-items: center; gap: 3px; height: 22px; padding: 0 3px; border: 1px solid transparent; flex: none; }
.b svg, .n svg, .view svg { width: 16px; height: 16px; }
.b:disabled { color: #929292; }
.b.on { background: #d9ebf9; border-color: #1a78c8; height: 24px; }
.ar, .tri { border: 3px solid transparent; border-top-color: #111; border-bottom: 0; width: 6px; flex: none; }
.ar { margin: 0 3px; }
.dim, .b:disabled .tri { border-top-color: #888; }
.sep { width: 1px; height: 16px; margin: 0 3px 0 2px; background: #c2c2c2; flex: none; }
.grip { width: 2px; height: 16px; margin: 0 2px 0 4px; flex: none; background: repeating-linear-gradient(#a8a8a8 0 2px, transparent 2px 4px); }
.grip.mid { margin: 0 2px 0 6px; }
.more { font-size: 14px; font-weight: 600; line-height: 14px; padding-bottom: 8px; flex: none; }
.more.gap { width: 27px; padding-left: 13px; }
.more.wide { margin-left: 36px; margin-right: 6px; }
.more.end { margin-left: auto; }
.more.tail { margin-left: 50px; margin-right: 5px; }
.pick { position: relative; display: flex; align-items: center; width: 70px; height: 22px; margin-right: 2px; background: #fff; flex: none; }
.pick::after { content: ""; position: absolute; right: 5px; top: 10px; border: 3px solid transparent; border-top-color: #111; border-bottom: 0; }
.pick select { appearance: none; width: 100%; height: 100%; border: 0; background: none; padding: 0 3px; }
.pick.short { width: 58px; }
.pick.view { width: 62px; padding-left: 3px; }
.pick.boxed { width: 56px; border: 1px solid #8a8a8a; background: #f4f4f4; margin: 0 2px 0 4px; }
.pick.boxed::after { border-top-color: #777; right: 3px; }

.main { display: flex; flex: 1; min-height: 0; padding-bottom: 3px; }
.work { flex: 1; min-width: 0; display: flex; flex-direction: column; }
.r1 { height: 24px; margin-bottom: 3px; }
.r2 { margin-bottom: 3px; }
.r3 { margin-bottom: 2px; }

/* navigation panel */
.nav { width: 223px; margin-right: 5px; flex: none; display: flex; flex-direction: column; font-feature-settings: "hwid"; font-family: "Noto Sans CJK SC", sans-serif; }
.nav-title { display: flex; align-items: center; height: 16px; gap: 8px; padding-right: 4px; background: #0050e6; color: #fff; }
.nav-title span { flex: 1; }
.nav-title button, .nav-title svg { display: block; width: 10px; height: 10px; }
.nav-tab { height: 23px; flex: none; border: 1px solid #a0a0a0; border-bottom: 0; background: #f0f0f0; }
.nav-tab:last-child { border-bottom: 1px solid #a0a0a0; }
.nav-tools { display: flex; gap: 8px; padding: 5px 6px; height: 26px; border: 1px solid #a0a0a0; border-bottom: 0; flex: none; }
.nav-tools svg { display: block; width: 16px; height: 16px; }
.tree { flex: 1; min-height: 0; overflow: hidden; display: flex; background: #fff; border: 1px solid #828790; border-left-width: 2px; margin-bottom: 1px; }
.tree ul { list-style: none; flex: 1; margin: 0; padding: 1px 0 0 12px; background: repeating-linear-gradient(#888 0 1px, transparent 1px 2px) 13px 0 / 1px 100% no-repeat; }
.tree li { display: flex; align-items: center; height: 16px; white-space: nowrap; }
.tree li svg { width: 16px; height: 16px; }
.leaf { margin-left: 20px; background: repeating-linear-gradient(#888 0 1px, transparent 1px 2px) 0 0 / 1px 100% no-repeat, repeating-linear-gradient(90deg, #888 0 1px, transparent 1px 2px) 0 8px / 11px 1px no-repeat; padding-left: 11px; }
.leaf.last { background-size: 1px 9px, 11px 1px; }
.tree li span { padding: 0 4px; line-height: 16px; }
.tree li.on span { background: #d6d6d6; }
.tree li .chev { width: 10px; height: 10px; margin: 0 7px 0 -5px; background: #fff; fill: none; stroke: #444; stroke-width: 2; }
.tree li .book { margin-left: -3px; }
.fresh { background: #ffe21a; font: bold 9px/9px "Open Sans", sans-serif; font-feature-settings: normal; margin: 0 0 6px 1px; color: #222; }
.vscroll { width: 17px; display: flex; flex-direction: column; background: #f0f0f0; }
.vscroll svg, .hscroll svg { display: block; width: 16px; height: 22px; fill: none; stroke: #505050; stroke-width: 2; }
.vtrack { flex: 1; display: flex; flex-direction: column; justify-content: flex-end; padding-bottom: 2px; }
.vtrack i { height: 48%; background: #cdcdcd; margin-right: 1px; }

/* drawing area */
.canvas { position: relative; flex: 1; min-height: 0; overflow: hidden; background: #000; }
.scene { display: block; width: 100%; height: 100%; }
.crisp { fill: none; shape-rendering: crispEdges; }
.cad text { font: 15px "Liberation Sans", sans-serif; fill: #e4e4e4; text-anchor: middle; }
.cad .small { font-size: 11px; }
.len { font: 16px "Liberation Sans", sans-serif; fill: #ddd; text-anchor: middle; }
.mark { font: 9px "Liberation Sans", sans-serif; fill: #aaa; text-anchor: middle; }
.axis { font: 12px "Liberation Sans", sans-serif; }
.hint { position: absolute; left: 567px; top: 183px; padding: 2px 2px 3px; border: 1px solid #767676; background: #ffffe1; line-height: 17px; }
.ime { position: absolute; right: 0; top: 163px; display: flex; align-items: center; width: 206px; }
.sogou { width: 28px; height: 28px; margin-right: -6px; position: relative; }
.ime-bar { flex: 1; display: flex; align-items: center; justify-content: space-between; height: 24px; padding: 0 3px 0 10px; background: #fff; color: #1f6fc0; }
.ime-bar b { font-size: 15px; }
.ime-bar svg { width: 16px; height: 16px; fill: #1f6fc0; }
.ime-bar .pale { fill: #b7bfd0; }

/* snap bar */
.snap { height: 28px; margin: 1px 0 4px; }
.num { display: flex; align-items: center; gap: 4px; color: #8a8a8a; margin-right: 2px; }
.spin { position: relative; width: 58px; height: 23px; border: 1px solid #7a7a7a; }
.spin.long { width: 68px; }
.spin input { width: 100%; height: 100%; border: 0; background: none; text-align: right; padding: 0 18px 0 0; color: #8a8a8a; }
.spin::before, .spin::after { content: ""; position: absolute; right: 4px; border: 3px solid transparent; }
.spin::before { top: 3px; border-top: 0; border-bottom-color: #555; }
.spin::after { bottom: 3px; border-bottom: 0; border-top-color: #555; }
.turn { display: flex; align-items: center; gap: 8px; margin-right: 4px; }
.turn input { appearance: none; width: 12px; height: 12px; margin: 0; border: 1px solid #888; background: #f4f4f4; }

/* rebar details */
.detail { display: flex; height: 180px; flex: none; }
.split { width: 12px; flex: none; background: radial-gradient(circle at 1px 1px, #c0c0c0 1px, transparent 1px) 2px 2px / 4px 4px; }
.split button, .split svg { display: block; width: 12px; height: 12px; }
.detail-body { flex: 1; min-width: 0; display: flex; flex-direction: column; }
.dbar { height: 27px; }
.n { display: flex; align-items: center; justify-content: center; width: 23px; height: 22px; flex: none; }
.total { padding-left: 6px; white-space: nowrap; }
.sheet { flex: 1; min-height: 0; display: flex; flex-direction: column; border: 1px solid #9a9a9a; margin-right: 1px; background: #fff; font-family: "Noto Sans CJK SC", sans-serif; font-feature-settings: "hwid"; }
table { width: 100%; table-layout: fixed; border-collapse: collapse; }
th, td { border-right: 1px solid #b8b8b8; border-bottom: 1px solid #b8b8b8; padding: 0 1px; font-weight: normal; text-align: left; white-space: nowrap; overflow: hidden; }
th:last-child, td:last-child { border-right: 0; }
th { height: 20px; padding: 0; text-align: center; background: linear-gradient(#fff, #ececec); }
th.end { text-align: right; }
th.hot { background: linear-gradient(#fbdca4, #f3bd6c); color: #7a1010; }
td { height: 19px; }
.cur td { height: 28px; background: #ccffdb; }
td.idx { text-align: center; background: #f6f6f6; padding-right: 8px; }
.cur td.idx { background: #ffcf86; color: #7a1010; }
td.cell { border-left: 1px solid #000; }
.cur td.cell { background: #aeead9; }
td.mid { text-align: center; }
.grade { width: 10px; height: 10px; }
td.shape { text-align: center; }
.shape span { display: block; width: 75%; margin: 0 auto 6px; line-height: 14px; border-bottom: 2px solid #000; color: #d01010; }
.w34 { width: 34px; } .w73 { width: 73px; } .w56 { width: 56px; } .w36 { width: 36px; } .w33 { width: 33px; }
.w201 { width: 201px; } .w166 { width: 166px; } .w156 { width: 156px; } .w61 { width: 61px; } .w38 { width: 38px; }
.w39 { width: 39px; } .w49 { width: 49px; }
.hscroll { display: flex; height: 16px; margin-top: auto; background: #f0f0f0; }
.hscroll svg { height: 16px; }
.htrack { flex: 1; display: flex; padding-left: 2px; }
.htrack i { width: 66%; background: #cdcdcd; }

/* status bar */
.status { display: flex; gap: 2px; height: 14px; flex: none; overflow: hidden; font-family: "Noto Sans CJK SC", sans-serif; font-feature-settings: "hwid"; }
.status span { border: 1px solid #cfcfcf; border-bottom: 0; background: #f8f8f8; padding: 0 1px; white-space: nowrap; }
.status .s5 { flex: 1; font-feature-settings: normal; }
.s1 { width: 148px; } .s2 { width: 79px; } .s3 { width: 97px; } .s4 { width: 49px; } .s6 { width: 70px; }

/* floating window */
.poi { position: absolute; right: 25px; top: 41px; width: 52px; background: #fff; box-shadow: 1px 2px 6px #888; }
.poi-title { display: flex; align-items: center; justify-content: space-between; height: 24px; padding: 0 0 0 3px; color: #999; }
.poi-title i { width: 18px; height: 18px; background: #e6e6e6; }
.poi button { display: block; width: 100%; height: 24px; border: 1px solid #666; border-right-width: 2px; border-bottom-width: 2px; background: #f0f0f0; }
```
